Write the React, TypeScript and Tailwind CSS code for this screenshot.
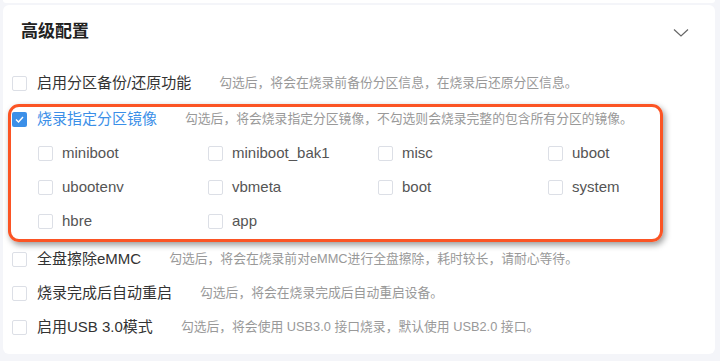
import { useState } from 'react'

const partitions = [
  'miniboot',
  'miniboot_bak1',
  'misc',
  'uboot',
  'ubootenv',
  'vbmeta',
  'boot',
  'system',
  'hbre',
  'app',
]

function Box({ checked }: { checked?: boolean }) {
  if (checked) {
    return (
      <span className="flex h-[15px] w-[15px] shrink-0 items-center justify-center rounded-[2px] bg-[#3b8fe8]">
        <svg width="9" height="7" viewBox="0 0 9 7" fill="none">
          <polyline points="1,3.5 3.5,6 8,1" stroke="#fff" strokeWidth="1.4" />
        </svg>
      </span>
    )
  }
  return <span className="h-[15px] w-[15px] shrink-0 rounded-[2px] border border-[#dcdfe6] bg-white" />
}

function Option({
  label,
  desc,
  checked,
  className = 'h-[34px]',
}: {
  label: string
  desc: string
  checked?: boolean
  className?: string
}) {
  return (
    <div className={`flex items-center ${className}`}>
      <Box checked={checked} />
      <span
        className={`ml-[10px] text-[15px] leading-5 ${checked ? 'text-[#3b8fe8]' : 'text-[#333]'}`}
      >
        {label}
      </span>
      <span className="ml-[28px] text-[12.8px] leading-5 text-[#999]">{desc}</span>
    </div>
  )
}

export default function App() {
  const [selected] = useState<string[]>([])

  return (
    <div
      className="h-[361px] w-full overflow-hidden bg-[#f4f5f9]"
      style={{ fontFamily: '"Liberation Sans", "Noto Sans CJK SC", sans-serif' }}
    >
      <div className="ml-[3px] mr-[5px] h-[3px] rounded-b-md bg-white" />
      <div className="ml-[3px] mr-[5px] mt-[2px] rounded-md bg-white pb-[10px]">
        <div className="flex h-[61px] items-start justify-between pl-[18px] pr-[26px] pt-[17px]">
          <h2 className="text-[17px] font-bold leading-5 text-[#222]">高级配置</h2>
          <svg width="16" height="10" viewBox="0 0 16 10" fill="none" className="mt-[6px]">
            <polyline points="1,1.5 8,8 15,1.5" stroke="#666" strokeWidth="1.2" />
          </svg>
        </div>

        <div className="pl-[9px]">
          <Option
            label="启用分区备份/还原功能"
            desc="勾选后，将会在烧录前备份分区信息，在烧录后还原分区信息。"
          />

          <div className="ml-[-4px] mt-[4px] w-[655px] rounded-[11px] border-[3px] border-[#fb5424] pb-[1px] pl-[1px] shadow-[2px_3px_6px_rgba(0,0,0,0.4)]">
            <Option
              checked
              className="h-[24px]"
              label="烧录指定分区镜像"
              desc="勾选后，将会烧录指定分区镜像，不勾选则会烧录完整的包含所有分区的镜像。"
            />
            <div className="grid grid-cols-[170px_170px_170px_170px] pl-[26px] pt-[5px]">
              {partitions.map((p) => (
                <div key={p} className="flex h-[34px] items-center">
                  <Box checked={selected.includes(p)} />
                  <span className="ml-[9px] text-[15px] leading-5 text-[#555]">{p}</span>
                </div>
              ))}
            </div>
          </div>

          <Option label="全盘擦除eMMC" desc="勾选后，将会在烧录前对eMMC进行全盘擦除，耗时较长，请耐心等待。" />
          <Option label="烧录完成后自动重启" desc="勾选后，将会在烧录完成后自动重启设备。" />
          <Option label="启用USB 3.0模式" desc="勾选后，将会使用 USB3.0 接口烧录，默认使用 USB2.0 接口。" />
        </div>
      </div>
    </div>
  )
}
